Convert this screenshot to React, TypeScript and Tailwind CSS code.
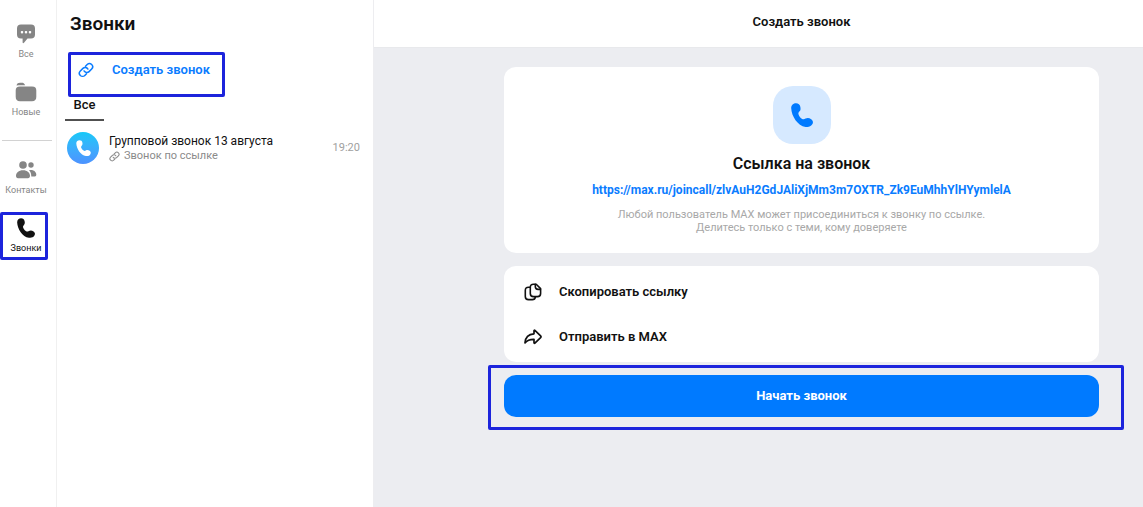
import React, { useState } from "react";

const CALL_URL = "https://max.ru/joincall/zlvAuH2GdJAliXjMm3m7OXTR_Zk9EuMhhYlHYymlelA";

function PhoneIcon({ className }: { className?: string }) {
    return (
        <svg viewBox="0 0 22 24" fill="currentColor" className={className} aria-hidden="true">
            <path d="M.2 5.2C0 2.200 2.400.2 5 .2c2.400 0 3.900 1.300 4.300 3.500.5 2.400.2 3.700-1 4.900-1.300 1.300-1.200 2.500-.1 4.300.8 1.300 1.700 2.300 2.900 3 1.400.8 2.100.5 3.400-.3 2-1.200 3.900-.7 5.700.6 2.100 1.500 2.200 3.500.9 5.400-1.400 2-3.700 2.700-6.500 2.300C6.500 22.700.6 13.200.2 5.200Z" />
        </svg>
    );
}

function LinkIcon({ className }: { className?: string }) {
    return (
        <svg
            viewBox="0 0 24 24"
            fill="none"
            stroke="currentColor"
            strokeWidth="2.3"
            strokeLinecap="round"
            className={className}
            aria-hidden="true"
        >
            <g transform="rotate(-45 12 12)">
                <path d="M8.5 16.5H5a4.750 4.750 0 0 1 0-9.500h5.500a4.750 4.750 0 0 1 4.600 6" />
                <path d="M15.500 7.500H19a4.750 4.750 0 0 1 0 9.500h-5.500a4.750 4.750 0 0 1-4.600-6" />
            </g>
        </svg>
    );
}

function ChatIcon() {
    return (
        <svg viewBox="0 0 20 20" className="size-5" aria-hidden="true">
            <path
                fill="currentColor"
                d="M5 .5h10c2.8 0 4 1.4 4 4v6c0 2.7-1.3 4-4 4h-3.5L8 18.8c-.7.8-1.4.5-1.4-.5v-3.800H5c-2.700 0-4-1.300-4-4v-6c0-2.600 1.300-4 4-4Z"
            />
            <g fill="#fff">
                <rect x="4.8" y="7" width="2.4" height="2.4" rx=".8" />
                <rect x="8.8" y="7" width="2.4" height="2.4" rx=".8" />
                <rect x="12.8" y="7" width="2.4" height="2.4" rx=".8" />
            </g>
        </svg>
    );
}

function FolderIcon() {
    return (
        <svg viewBox="0 0 22 20" fill="currentColor" className="h-5 w-[22px]" aria-hidden="true">
            <path d="M1.5 3.600C2 1.500 3.200.8 5 .8h1.800c1.300 0 2 .4 2.600 1.300l.8 1.200c-3.500-.2-6.500-.3-8.700.3Z" />
            <path d="M5 4.600h12c3.200 0 4.300 1.200 4.300 4v6.200c0 3-1.300 4.400-4.300 4.400H5c-3 0-4.300-1.400-4.300-4.400V8.600c0-2.800 1.300-4 4.300-4Z" />
        </svg>
    );
}

function ContactsIcon() {
    return (
        <svg viewBox="0 0 22 20" fill="currentColor" className="h-5 w-[22px]" aria-hidden="true">
            <circle cx="8" cy="5" r="3.8" />
            <circle cx="16" cy="5" r="2.7" />
            <path d="M8 10.300c4.400 0 7 2.600 7 5.500 0 1.600-.7 2.400-2 2.400H3c-1.300 0-2-.8-2-2.400 0-2.900 2.600-5.500 7-5.500Z" />
            <path d="M14 10.200c4.600-1 7.300 1.700 7.300 4.400 0 1.300-.5 1.900-1.500 1.900h-3.500c0-2.400-.6-4.700-2.300-6.300Z" />
        </svg>
    );
}

function CopyIcon() {
    return (
        <svg
            viewBox="0 0 18 18"
            fill="none"
            stroke="currentColor"
            strokeWidth="1.6"
            strokeLinejoin="round"
            strokeLinecap="round"
            className="size-[18px]"
            aria-hidden="true"
        >
            <path d="M9.500 1.200h2.700L16.600 5.600v4.800c0 2.200-1 3.200-3.200 3.200H9.500c-2.200 0-3.200-1-3.200-3.200v-6c0-2.200 1-3.200 3.200-3.200Z" />
            <path d="M11.300 1.400v2.200c0 2 .8 2.800 2.800 2.800h2.300" />
            <path d="M6 4.200H4.500c-2.200 0-3.200 1-3.200 3.200v6c0 2.200 1 3.200 3.200 3.200h3.700c2 0 3-.9 3.200-2.800" />
        </svg>
    );
}

function ShareIcon() {
    return (
        <svg
            viewBox="0 0 18 18"
            fill="none"
            stroke="currentColor"
            strokeWidth="1.7"
            strokeLinejoin="round"
            className="size-[18px]"
            aria-hidden="true"
        >
            <path d="M10 2.700v3.100C4.800 6 1.400 9 1 14.900c2.200-2.700 4.800-3.700 9-3.600v3.400c0 .6.500.8.900.4l5.700-5.400c.6-.6.6-1.200 0-1.800l-5.700-5.500c-.4-.4-.9-.2-.9.300Z" />
        </svg>
    );
}

function Highlight({ className }: { className: string }) {
    return (
        <div
            className={`pointer-events-none absolute rounded-xs border-3 border-[#1c24dc] ${className}`}
        />
    );
}

function NavItem({
    label,
    active,
    onClick,
    children,
}: {
    label: string;
    active: boolean;
    onClick: () => void;
    children: React.ReactNode;
}) {
    return (
        <button
            type="button"
            onClick={onClick}
            className={`flex w-full flex-col items-center gap-1 ${active ? "text-[#111]" : "text-[#858585]"}`}
        >
            {children}
            <span className="text-[9px] leading-3">{label}</span>
        </button>
    );
}

export default function App() {
    const [section, setSection] = useState("calls");

    return (
        <div className="flex min-h-screen bg-white font-[Roboto,sans-serif] text-[#111]">
            <nav className="w-[57px] shrink-0 border-r border-[#f0f0f0] pr-1">
                <div className="flex flex-col gap-[22px] pt-6">
                    <NavItem label="Все" active={section === "all"} onClick={() => setSection("all")}>
                        <ChatIcon />
                    </NavItem>
                    <NavItem label="Новые" active={section === "new"} onClick={() => setSection("new")}>
                        <FolderIcon />
                    </NavItem>
                </div>
                <hr className="mt-[22px] mb-[19px] ml-0.5 border-[#d2d2d2]" />
                <div className="flex flex-col gap-[22px]">
                    <NavItem
                        label="Контакты"
                        active={section === "contacts"}
                        onClick={() => setSection("contacts")}
                    >
                        <ContactsIcon />
                    </NavItem>
                    <div className="relative">
                        <NavItem
                            label="Звонки"
                            active={section === "calls"}
                            onClick={() => setSection("calls")}
                        >
                            <PhoneIcon className="h-5 w-[18px]" />
                        </NavItem>
                        <Highlight className="-top-1.5 right-1 -bottom-1.5 left-0" />
                    </div>
                </div>
            </nav>

            <aside className="w-[317px] shrink-0 border-r border-[#ededf0]">
                <h1 className="px-[13px] pt-3 text-[19px] leading-6 font-semibold">Звонки</h1>

                <div className="relative mt-4 ml-[11px] w-[157px]">
                    <button
                        type="button"
                        className="flex h-10 w-full items-start gap-[18px] pt-[10px] pl-2.5 text-[#0a7cff]"
                    >
                        <LinkIcon className="size-4" />
                        <span className="text-[13px] leading-4 font-semibold whitespace-nowrap">
                            Создать звонок
                        </span>
                    </button>
                    <Highlight className="inset-x-0 top-0 -bottom-[5px]" />
                </div>

                <div className="flex pt-[5px] pl-2">
                    <button
                        type="button"
                        className="h-6 w-[39px] border-b-2 border-[#505050] pb-1.5 text-[13px] leading-4 font-medium"
                    >
                        Все
                    </button>
                </div>

                <a href="#call" className="mt-[11px] flex items-center gap-2.5 pr-[13px] pl-[10px]">
                    <span className="flex size-8 shrink-0 items-center justify-center rounded-full bg-linear-to-b from-[#12c8f8] to-[#4c92ff] text-white">
                        <PhoneIcon className="h-4 w-[15px]" />
                    </span>
                    <span className="min-w-0 flex-1">
                        <span className="block text-[12px] leading-4">Групповой звонок 13 августа</span>
                        <span className="flex items-center gap-1 text-[11px] leading-[14px] text-[#8a8a8a]">
                            <LinkIcon className="size-[11px]" />
                            Звонок по ссылке
                        </span>
                    </span>
                    <time className="text-[11px] text-[#a0a0a0]">19:20</time>
                </a>
            </aside>

            <main className="flex min-w-0 flex-1 flex-col">
                <header className="flex h-12 items-center justify-center border-b border-[#e8e9ec] pr-11 pb-1 pl-[130px]">
                    <h2 className="text-[13px] leading-4 font-semibold">Создать звонок</h2>
                </header>

                <div className="flex-1 bg-[#ecedf1] pt-[19px] pr-11 pl-[130px]">
                    <section className="flex flex-col items-center rounded-xl bg-white py-[19px] text-center">
                        <div className="flex size-[58px] items-center justify-center rounded-[20px] bg-[#d6e9ff] text-[#007aff]">
                            <PhoneIcon className="h-6 w-[22px]" />
                        </div>
                        <h3 className="mt-2 text-base leading-6 font-semibold">Ссылка на звонок</h3>
                        <a href={CALL_URL} className="mt-1.5 text-[12px] leading-4 font-bold text-[#0a7cff]">
                            {CALL_URL}
                        </a>
                        <p className="mt-2.5 text-[11px] leading-[13px] text-[#a8a8a8]">
                            Любой пользователь MAX может присоединиться к звонку по ссылке.
                            <br />
                            Делитесь только с теми, кому доверяете
                        </p>
                    </section>

                    <section className="mt-[13px] flex flex-col rounded-xl bg-white py-[3px] text-[13px] font-semibold">
                        <button type="button" className="flex h-[45px] items-center gap-[17px] px-5">
                            <CopyIcon />
                            Скопировать ссылку
                        </button>
                        <button type="button" className="flex h-[45px] items-center gap-[17px] px-5">
                            <ShareIcon />
                            Отправить в MAX
                        </button>
                    </section>

                    <div className="relative mt-[13px]">
                        <button
                            type="button"
                            className="h-[42px] w-full rounded-xl bg-[#007aff] text-[13px] font-bold text-white"
                        >
                            Начать звонок
                        </button>
                        <Highlight className="-top-2.5 -right-[25px] -bottom-[13px] -left-4" />
                    </div>
                </div>
            </main>
        </div>
    );
}
